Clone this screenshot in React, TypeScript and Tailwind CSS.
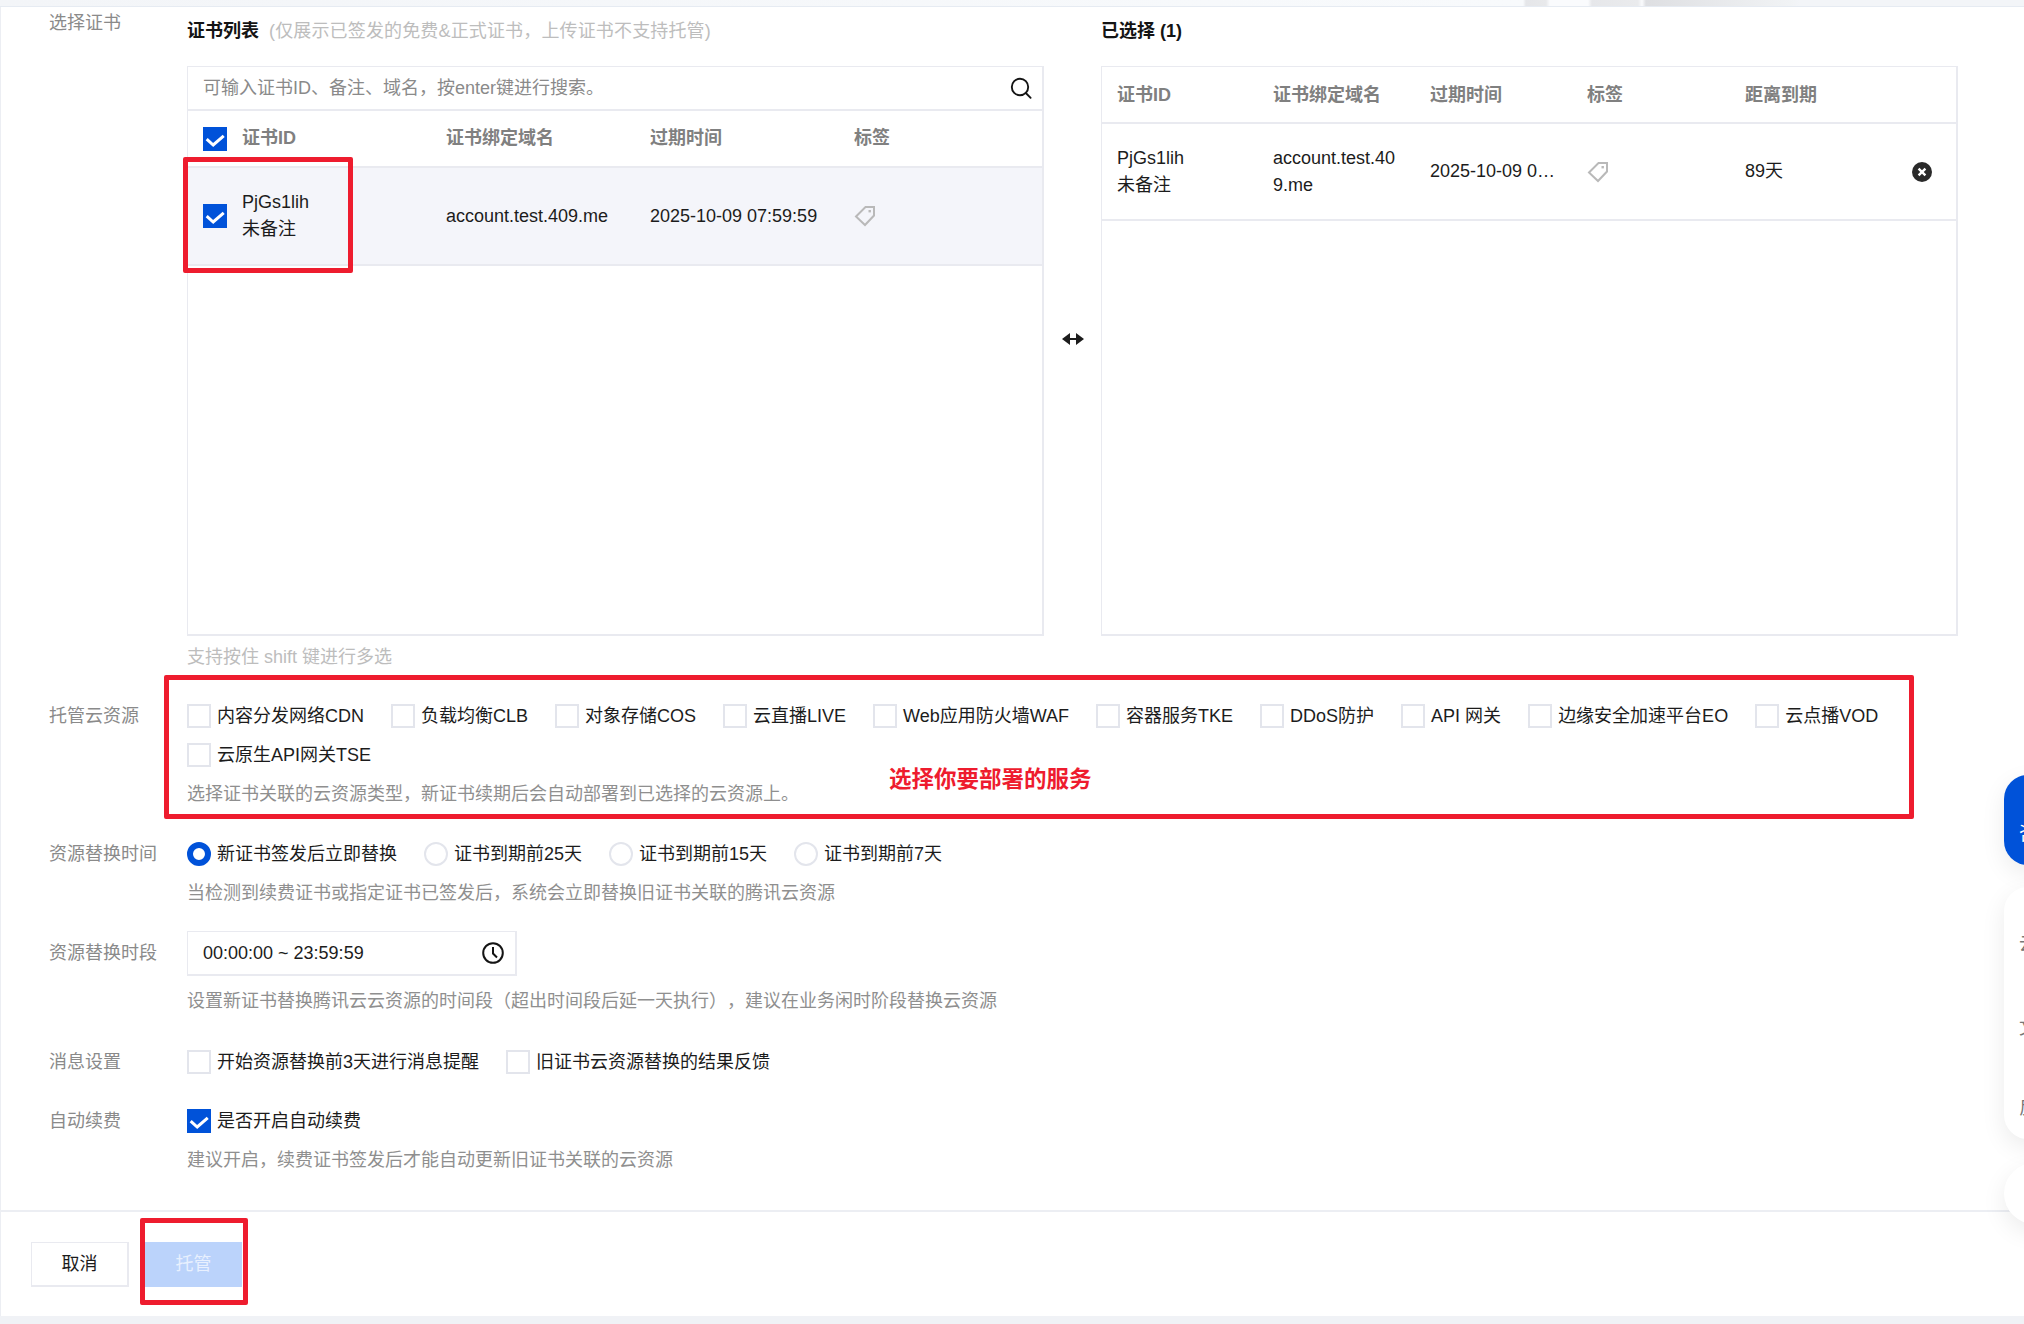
import React from 'react';

function Check({ checked = false }: { checked?: boolean }) {
  if (!checked) return <span className="w-[24px] h-[24px] shrink-0 bg-white border-2 border-[#e3e5ec]" />;
  return (
    <span className="w-[24px] h-[24px] shrink-0 bg-[#0052d9] flex items-center justify-center">
      <svg width="24" height="24" viewBox="0 0 24 24" fill="none">
        <path d="M4.8 13.2 L10.2 18 L19.6 9.8" stroke="#fff" strokeWidth="3" strokeLinecap="square" />
      </svg>
    </span>
  );
}

function CheckItem({ text, checked }: { text: string; checked?: boolean }) {
  return (
    <label className="flex items-center gap-[6px] h-[24px] leading-[24px] text-[#1c1c1c]">
      <Check checked={checked} />
      <span className="whitespace-nowrap">{text}</span>
    </label>
  );
}

function RadioItem({ text, checked }: { text: string; checked?: boolean }) {
  return (
    <label className="flex items-center gap-[6px] h-[24px] leading-[24px] text-[#1c1c1c]">
      <span className={checked ? 'w-[24px] h-[24px] rounded-full bg-white border-[6px] border-[#0052d9]' : 'w-[24px] h-[24px] rounded-full bg-white border-2 border-[#e3e5ec]'} />
      <span className="whitespace-nowrap">{text}</span>
    </label>
  );
}

function TagIcon() {
  return (
    <svg width="22" height="22" viewBox="0 0 22 22" fill="none">
      <path d="M11.5 2 H20 V10.5 L11 20 L2 11.5 Z" stroke="#b9b9b9" strokeWidth="2" strokeLinejoin="miter" />
      <rect x="14.5" y="5" width="2.4" height="2.4" fill="#b9b9b9" />
    </svg>
  );
}

function Hint({ children, className = '' }: { children: React.ReactNode; className?: string }) {
  return <div className={`text-[#8f8f8f] leading-[27px] whitespace-nowrap ${className}`}>{children}</div>;
}

function Row({ label, labelH = 'h-[24px] leading-[24px]', className = '', children }: { label: string; labelH?: string; className?: string; children: React.ReactNode }) {
  return (
    <div className={`flex items-start ${className}`}>
      <div className={`w-[138px] shrink-0 text-[#8a8a8a] whitespace-nowrap ${labelH}`}>{label}</div>
      <div className="flex-1 min-w-0">{children}</div>
    </div>
  );
}

const clouds = [
  '内容分发网络CDN',
  '负载均衡CLB',
  '对象存储COS',
  '云直播LIVE',
  'Web应用防火墙WAF',
  '容器服务TKE',
  'DDoS防护',
  'API 网关',
  '边缘安全加速平台EO',
  '云点播VOD',
  '云原生API网关TSE',
];

export default function App() {
  return (
    <div className="relative w-[2024px] h-[1324px] overflow-hidden flex flex-col bg-white text-[18px] [text-spacing-trim:space-all] [font-family:'Liberation_Sans','Noto_Sans_CJK_SC',sans-serif]">
      <div className="h-[7px] shrink-0 border-b border-[#e6ebf2] bg-[linear-gradient(90deg,#f3f5f8_0px,#f8fafc_1523px,#e5e6e9_1526px,#e8e9eb_1546px,#fafbfd_1550px,#fafbfd_1588px,#e6e7ea_1592px,#eaebed_1638px,#fafbfd_1642px,#dedfe2_1646px,#f1f3f5_1790px,#f3f5f8_1800px)]" />

      <div className="flex-1 min-h-0 border-l border-[#eceef3] flex flex-col pl-[48px]">
        {/* cert picker */}
        <div className="flex items-start">
          <div className="w-[138px] shrink-0 pt-[3px] leading-[27px] text-[#8a8a8a]">选择证书</div>
          <div className="pt-[11px]">
            <div className="flex">
              <div className="w-[857px]">
                <div className="h-[27px] leading-[27px] whitespace-nowrap">
                  <span className="font-bold text-[#141414]">证书列表</span>
                  <span className="ml-[10px] tracking-[0.15px] text-[#bdbdbd]">(仅展示已签发的免费&amp;正式证书，上传证书不支持托管)</span>
                </div>
                <div className="mt-[21px] h-[570px] border-2 border-t border-l border-[#e9eaf0]">
                  <div className="h-[44px] flex items-center justify-between pl-[15px] pr-[10px] border-b-2 border-[#e9eaf0]">
                    <span className="text-[#8a8a8a]">可输入证书ID、备注、域名，按enter键进行搜索。</span>
                    <svg width="22" height="22" viewBox="0 0 22 22" fill="none" stroke="#141414" strokeWidth="1.9">
                      <circle cx="10" cy="10" r="8.2" />
                      <path d="M15.8 16 L20.6 20.8" strokeLinecap="round" />
                    </svg>
                  </div>
                  <div className="h-[57px] flex items-center font-bold text-[#808080] border-b-2 border-[#e9eaf0]">
                    <div className="w-[258px] pl-[15px] flex items-center gap-[15px]">
                      <Check checked />
                      <span>证书ID</span>
                    </div>
                    <div className="w-[204px]">证书绑定域名</div>
                    <div className="w-[204px]">过期时间</div>
                    <div>标签</div>
                  </div>
                  <div className="h-[98px] flex items-center bg-[#f4f5fa] text-[#1c1c1c] border-b-2 border-[#e9eaf0]">
                    <div className="w-[258px] pl-[15px] flex items-center gap-[15px]">
                      <Check checked />
                      <div className="leading-[27px]">
                        <div>PjGs1lih</div>
                        <div>未备注</div>
                      </div>
                    </div>
                    <div className="w-[204px]">account.test.409.me</div>
                    <div className="w-[204px] whitespace-nowrap">2025-10-09 07:59:59</div>
                    <TagIcon />
                  </div>
                </div>
              </div>

              <div className="w-[57px] h-[569px] mt-[48px] flex items-center justify-center pb-[24px]">
                <svg width="24" height="14" viewBox="0 0 24 14" fill="#1c1c1c">
                  <path d="M1 7 L9 1 V6 H15 V1 L23 7 L15 13 V8 H9 V13 Z" />
                </svg>
              </div>

              <div className="w-[857px]">
                <div className="h-[27px] leading-[27px] font-bold text-[#141414]">已选择 (1)</div>
                <div className="mt-[21px] h-[570px] border-2 border-t border-l border-[#e9eaf0]">
                  <div className="h-[57px] pt-[2px] flex items-center font-bold text-[#808080] border-b-2 border-[#e9eaf0]">
                    <div className="w-[171px] pl-[15px]">证书ID</div>
                    <div className="w-[157px]">证书绑定域名</div>
                    <div className="w-[157px]">过期时间</div>
                    <div className="w-[158px]">标签</div>
                    <div>距离到期</div>
                  </div>
                  <div className="h-[97px] flex items-center text-[#1c1c1c] border-b-2 border-[#e9eaf0] leading-[27px]">
                    <div className="w-[171px] pl-[15px]">
                      <div>PjGs1lih</div>
                      <div>未备注</div>
                    </div>
                    <div className="w-[157px] pr-[24px] break-all">account.test.409.me</div>
                    <div className="w-[157px] pr-[30px] truncate">2025-10-09 07:59:59</div>
                    <div className="w-[158px]"><TagIcon /></div>
                    <div className="w-[167px]">89天</div>
                    <svg width="20" height="20" viewBox="0 0 20 20">
                      <circle cx="10" cy="10" r="10" fill="#2a2a2a" />
                      <path d="M6.6 6.6 L13.4 13.4 M13.4 6.6 L6.6 13.4" stroke="#fff" strokeWidth="2.4" />
                    </svg>
                  </div>
                </div>
              </div>
            </div>
            <div className="mt-[8px] leading-[27px] text-[#bdbdbd]">支持按住 shift 键进行多选</div>
          </div>
        </div>

        <Row label="托管云资源" className="mt-[33px]">
          <div className="flex flex-wrap gap-x-[27px] gap-y-[15px]">
            {clouds.map((c) => (
              <CheckItem key={c} text={c} />
            ))}
          </div>
          <Hint className="mt-[14px]">选择证书关联的云资源类型，新证书续期后会自动部署到已选择的云资源上。</Hint>
        </Row>

        <Row label="资源替换时间" className="mt-[34px]">
          <div className="flex gap-x-[27px]">
            <RadioItem text="新证书签发后立即替换" checked />
            <RadioItem text="证书到期前25天" />
            <RadioItem text="证书到期前15天" />
            <RadioItem text="证书到期前7天" />
          </div>
          <Hint className="mt-[14px]">当检测到续费证书或指定证书已签发后，系统会立即替换旧证书关联的腾讯云资源</Hint>
        </Row>

        <Row label="资源替换时段" labelH="h-[45px] leading-[45px]" className="mt-[24px]">
          <div className="w-[330px] h-[45px] border-2 border-t border-l border-[#e9eaf0] flex items-center justify-between pl-[15px] pr-[11px] text-[#1c1c1c]">
            <span>00:00:00 ~ 23:59:59</span>
            <svg width="22" height="22" viewBox="0 0 22 22" fill="none" stroke="#141414" strokeWidth="2">
              <circle cx="11" cy="11" r="9.8" />
              <path d="M11 5 V11.5 L15 15.5" />
            </svg>
          </div>
          <Hint className="mt-[12px]">设置新证书替换腾讯云云资源的时间段（超出时间段后延一天执行），建议在业务闲时阶段替换云资源</Hint>
        </Row>

        <Row label="消息设置" className="mt-[35px]">
          <div className="flex gap-x-[27px]">
            <CheckItem text="开始资源替换前3天进行消息提醒" />
            <CheckItem text="旧证书云资源替换的结果反馈" />
          </div>
        </Row>

        <Row label="自动续费" className="mt-[35px]">
          <CheckItem text="是否开启自动续费" checked />
          <Hint className="mt-[14px]">建议开启，续费证书签发后才能自动更新旧证书关联的云资源</Hint>
        </Row>

        <div className="mt-[36px] -ml-[48px] border-t-2 border-[#eceef3] pt-[30px] pl-[30px] flex gap-[16px]">
          <button className="w-[98px] h-[45px] bg-white border-2 border-t border-l border-[#e9eaf0] text-[#1c1c1c]">取消</button>
          <button className="w-[97px] h-[45px] bg-[#bbd3fb] text-[#e8f0fe]">托管</button>
        </div>
      </div>

      <div className="h-[8px] shrink-0 bg-[#f0f2f6]" />

      {/* annotation boxes */}
      <div className="absolute left-[183px] top-[157px] w-[170px] h-[116px] border-[5px] border-[#ee1c2e] rounded-[2px]" />
      <div className="absolute left-[164px] top-[675px] w-[1750px] h-[144px] border-[5px] border-[#ee1c2e] rounded-[2px]" />
      <div className="absolute left-[140px] top-[1218px] w-[108px] h-[87px] border-[5px] border-[#ee1c2e] rounded-[2px]" />
      <div className="absolute left-[889px] top-[765px] text-[22.5px] leading-[30px] font-bold text-[#ee1c2e] whitespace-nowrap">选择你要部署的服务</div>

      {/* floating side tools */}
      <div className="absolute left-[2004px] top-[775px] w-[60px] h-[90px] rounded-[24px] bg-[#0052d9] text-white pl-[15px] pt-[46px] leading-[27px] shadow-[0_8px_24px_rgba(0,0,0,0.08)]">咨</div>
      <div className="absolute left-[2004px] top-[887px] w-[60px] h-[252px] rounded-[24px] bg-white text-[#777] pl-[15px] pt-[44px] shadow-[0_8px_24px_rgba(0,0,0,0.08)]">
        <div className="leading-[27px]">云</div>
        <div className="mt-[57px] leading-[27px]">文</div>
        <div className="mt-[53px] leading-[27px]">反</div>
      </div>
      <div className="absolute left-[2004px] top-[1163px] w-[61px] h-[61px] rounded-full bg-white shadow-[0_8px_24px_rgba(0,0,0,0.08)]" />
    </div>
  );
}
